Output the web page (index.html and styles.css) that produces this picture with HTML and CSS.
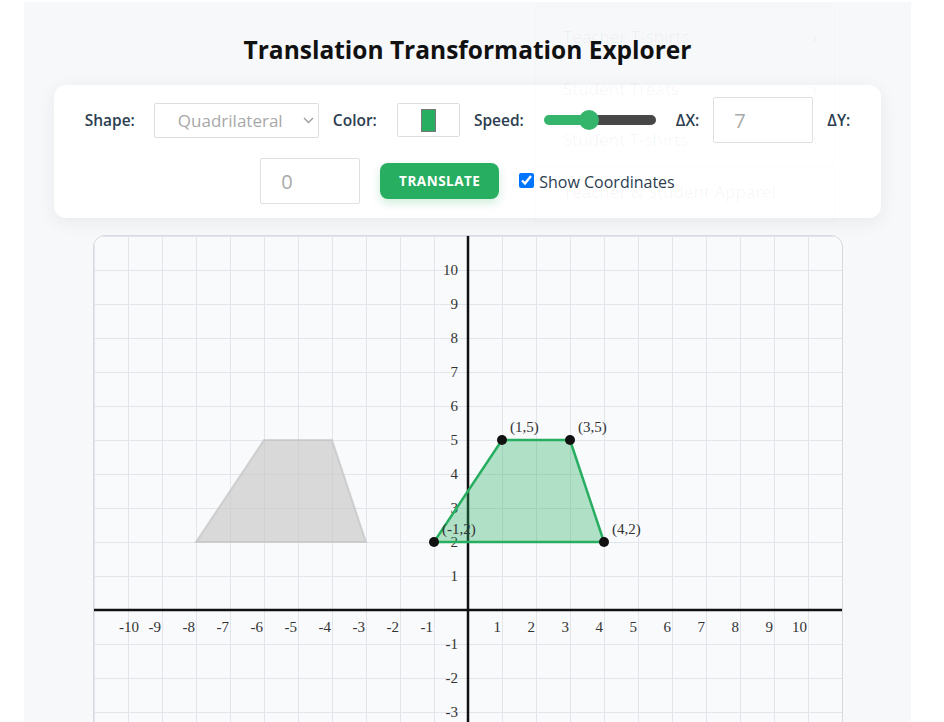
FILE: index.html
```html
<!DOCTYPE html>
<html lang="en">
<head>
<meta charset="utf-8">
<title>Translation Transformation Explorer</title>
<link rel="stylesheet" href="styles.css">
</head>
<body>
<div class="app">
  <h1 class="title">Translation Transformation Explorer</h1>
  <div class="controls">
    <label class="lbl" for="shape">Shape:</label>
    <div class="select-wrap">
      <select id="shape" class="select"><option>Quadrilateral</option></select>
      <svg class="chev" width="11" height="7" viewBox="0 0 11 7"><path d="M1 1l4.5 4.5L10 1" fill="none" stroke="#9a9a9a" stroke-width="1.3"/></svg>
    </div>
    <label class="lbl">Color:</label>
    <span class="color-box"><span class="swatch"></span></span>
    <label class="lbl">Speed:</label>
    <input type="range" class="range" min="0" max="100" value="38">
    <label class="lbl" for="dx">ΔX:</label>
    <input id="dx" class="num" type="text" value="7">
    <label class="lbl" for="dy">ΔY:</label>
    <input id="dy" class="num" type="text" value="0">
    <button class="btn">TRANSLATE</button>
    <label class="check"><input type="checkbox" class="cb" checked>Show Coordinates</label>
  </div>
  <div class="graph">
    <svg class="plane" width="748" height="748" viewBox="0 0 748 748">
      <defs>
        <pattern id="grid" width="34" height="34" patternUnits="userSpaceOnUse">
          <path d="M0.5 0V34M0 0.5H34" stroke="#e2e5eb" stroke-width="1" fill="none"/>
        </pattern>
      </defs>
      <rect x="0" y="0" width="748" height="748" fill="url(#grid)"/>
      <line x1="0" y1="374" x2="748" y2="374" stroke="#111" stroke-width="2.5"/>
      <line x1="374" y1="0" x2="374" y2="748" stroke="#111" stroke-width="2.5"/>
      <g class="ax" text-anchor="end">
        <text x="35" y="396" text-anchor="middle">-10</text>
        <text x="67" y="396">-9</text>
        <text x="101" y="396">-8</text>
        <text x="135" y="396">-7</text>
        <text x="169" y="396">-6</text>
        <text x="203" y="396">-5</text>
        <text x="237" y="396">-4</text>
        <text x="271" y="396">-3</text>
        <text x="305" y="396">-2</text>
        <text x="339" y="396">-1</text>
        <text x="407" y="396">1</text>
        <text x="441" y="396">2</text>
        <text x="475" y="396">3</text>
        <text x="509" y="396">4</text>
        <text x="543" y="396">5</text>
        <text x="577" y="396">6</text>
        <text x="611" y="396">7</text>
        <text x="645" y="396">8</text>
        <text x="679" y="396">9</text>
        <text x="713" y="396">10</text>
        <text x="364" y="39">10</text>
        <text x="364" y="73">9</text>
        <text x="364" y="107">8</text>
        <text x="364" y="141">7</text>
        <text x="364" y="175">6</text>
        <text x="364" y="209">5</text>
        <text x="364" y="243">4</text>
        <text x="364" y="277">3</text>
        <text x="364" y="311">2</text>
        <text x="364" y="345">1</text>
        <text x="364" y="413">-1</text>
        <text x="364" y="447">-2</text>
        <text x="364" y="481">-3</text>
        <text x="364" y="515">-4</text>
        <text x="364" y="549">-5</text>
        <text x="364" y="583">-6</text>
        <text x="364" y="617">-7</text>
        <text x="364" y="651">-8</text>
        <text x="364" y="685">-9</text>
        <text x="364" y="719">-10</text>
      </g>
      <polygon points="102,306 170,204 238,204 272,306" fill="rgba(200,200,200,0.65)" stroke="rgba(190,190,190,0.6)" stroke-width="2"/>
      <polygon points="340,306 408,204 476,204 510,306" fill="rgba(39,174,96,0.35)" stroke="#27ae60" stroke-width="2.5" stroke-linejoin="round"/>
      <g fill="#111">
        <circle cx="340" cy="306" r="5"/>
        <circle cx="408" cy="204" r="5"/>
        <circle cx="476" cy="204" r="5"/>
        <circle cx="510" cy="306" r="5"/>
      </g>
      <g class="pt">
        <text x="348" y="298">(-1,2)</text>
        <text x="416" y="196">(1,5)</text>
        <text x="484" y="196">(3,5)</text>
        <text x="518" y="298">(4,2)</text>
      </g>
    </svg>
  </div>
</div>
<div class="ghost-menu">
  <div class="ghost-item"><span>Teacher T-shirts</span><span class="gchev">›</span></div>
  <div class="ghost-item"><span>Student Treats</span><span class="gchev">›</span></div>
  <div class="ghost-item"><span>Student T-shirts</span><span class="gchev">›</span></div>
  <div class="ghost-item"><span>Teacher &amp; Student Apparel</span><span class="gchev"></span></div>
</div>
</body>
</html>
```

FILE: styles.css
```css
* { box-sizing: border-box; }

html, body {
  margin: 0;
  padding: 0;
  background: #ffffff;
  font-family: "Open Sans", "Noto Sans", Arial, sans-serif;
  overflow: hidden;
}

.app {
  margin: 2px 0 0 24px;
  width: 887px;
  min-height: 1100px;
  padding: 32px 30px 40px;
  background: #f7f8fa;
}

.title {
  margin: 0 0 19px;
  font-size: 24.5px;
  line-height: 32px;
  font-weight: 700;
  color: #111;
  text-align: center;
}

.controls {
  background: #fff;
  border-radius: 12px;
  box-shadow: 0 4px 18px rgba(30, 40, 60, 0.07);
  padding: 12px 20px 14px;
  display: flex;
  flex-wrap: wrap;
  justify-content: center;
  align-items: center;
  column-gap: 14px;
  row-gap: 15px;
}

.lbl {
  font-size: 15.5px;
  font-weight: 600;
  color: #2c3e50;
}

.select-wrap {
  position: relative;
  display: flex;
  margin-left: 5px;
}

.select {
  -webkit-appearance: none;
  appearance: none;
  width: 165px;
  height: 35px;
  border: 1px solid #dedede;
  border-radius: 2px;
  background: #fff;
  padding: 0 0 0 23px;
  font-family: "Open Sans", Arial, sans-serif;
  font-size: 17px;
  color: #a8a8a8;
}

.chev {
  position: absolute;
  right: 5px;
  top: 14px;
}

.color-box {
  width: 63px;
  height: 34px;
  margin-left: 6px;
  border: 1px solid #dedede;
  border-radius: 2px;
  background: #fff;
  display: flex;
  align-items: center;
  justify-content: center;
}

.swatch {
  width: 15px;
  height: 23px;
  background: #27ae60;
  border: 1px solid #777;
}

.range {
  -webkit-appearance: none;
  appearance: none;
  width: 112px;
  height: 10px;
  margin: 0 6px;
  border-radius: 5px;
  background: linear-gradient(to right, #35b46c 0%, #35b46c 40%, #474747 40%, #474747 100%);
  outline: none;
}

.range::-webkit-slider-thumb {
  -webkit-appearance: none;
  appearance: none;
  width: 20px;
  height: 20px;
  border-radius: 50%;
  background: #35b46c;
  border: none;
}

.num {
  width: 100px;
  height: 46px;
  border: 1px solid #e0e0e0;
  border-radius: 2px;
  background: #fff;
  padding: 0 0 0 20px;
  font-family: "Open Sans", Arial, sans-serif;
  font-size: 20px;
  color: #a9a9a9;
}

.btn {
  width: 119px;
  height: 36px;
  margin: 0 6px;
  border: none;
  border-radius: 8px;
  background: #27ae60;
  color: #fff;
  font-family: "Open Sans", Arial, sans-serif;
  font-size: 13.5px;
  font-weight: 700;
  letter-spacing: 0.5px;
  box-shadow: 0 4px 10px rgba(39, 174, 96, 0.22);
}

.check {
  display: flex;
  align-items: center;
  font-size: 16px;
  font-weight: 500;
  color: #2c3e50;
  position: relative;
  top: 1px;
}

.cb {
  width: 15px;
  height: 15px;
  margin: 0 5px 0 0;
  position: relative;
  top: -2px;
}

.graph {
  margin: 17px auto 0;
  width: 750px;
  border: 1px solid #d6d9df;
  border-radius: 12px;
  overflow: hidden;
  background: #f9fafc;
}

.plane {
  display: block;
}

.ax text {
  font-family: "Liberation Serif", "Times New Roman", serif;
  font-size: 15px;
  fill: #333;
}

.pt text {
  font-family: "Liberation Serif", "Times New Roman", serif;
  font-size: 15px;
  fill: #333;
}

.ghost-menu {
  position: absolute;
  left: 535px;
  top: 6px;
  width: 300px;
  padding: 4px 0;
  border: 1px solid rgba(0, 0, 0, 0.01);
  color: rgba(0, 0, 0, 0.045);
  font-size: 17px;
  pointer-events: none;
}

.ghost-item {
  height: 51.5px;
  display: flex;
  align-items: center;
  justify-content: space-between;
  padding: 0 16px 0 27px;
}

.ghost-item + .ghost-item + .ghost-item + .ghost-item {
  border-top: 1px solid rgba(0, 0, 0, 0.012);
}

.gchev {
  font-size: 20px;
}
```
